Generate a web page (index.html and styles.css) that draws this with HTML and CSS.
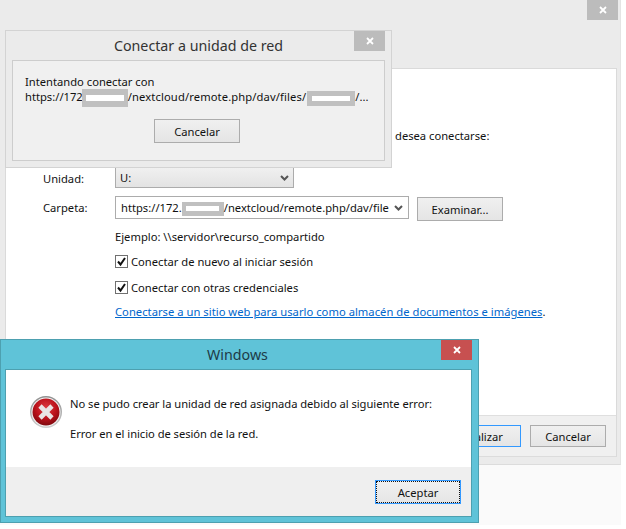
FILE: index.html
```html
<!DOCTYPE html>
<html lang="es">
<head>
<meta charset="utf-8">
<title>Conectar a unidad de red</title>
<link rel="stylesheet" href="styles.css">
</head>
<body>
<div class="backdrop"></div>
<section class="window back">
  <div class="titlebar"><span class="close idle back-close"><svg class="x" viewBox="0 0 8 8"><path d="M1 1l6 6M7 1l-6 6"/></svg></span></div>
  <div class="client">
    <main class="form">
      <p class="lead">desea conectarse:</p>
      <div class="row unit-row">
        <span class="label label-unit">Unidad:</span>
        <div class="select">U:<svg class="chev" viewBox="0 0 9 6"><path d="M1 1l3.500 3.500L8 1"/></svg></div>
      </div>
      <div class="row folder-row">
        <span class="label label-folder">Carpeta:</span>
        <div class="combo"><span class="combo-text">https://172.<span class="mask mask-c"><i></i></span>/nextcloud/remote.php/dav/file</span><svg class="chev" viewBox="0 0 9 6"><path d="M1 1l3.500 3.500L8 1"/></svg></div>
        <button class="btn browse">Examinar...</button>
      </div>
      <p class="example">Ejemplo: \\servidor\recurso_compartido</p>
      <label class="check first"><span class="box"><svg viewBox="0 0 11 11"><path d="M2 5.500l2.500 3L9 2"/></svg></span>Conectar de nuevo al iniciar sesión</label>
      <label class="check second"><span class="box"><svg viewBox="0 0 11 11"><path d="M2 5.500l2.500 3L9 2"/></svg></span>Conectar con otras credenciales</label>
      <p class="linkline"><a href="#">Conectarse a un sitio web para usarlo como almacén de documentos e imágenes</a>.</p>
    </main>
    <footer class="footer">
      <button class="btn default finish">Finalizar</button>
      <button class="btn cancel">Cancelar</button>
    </footer>
  </div>
</section>

<section class="window progress">
  <div class="bar-progress">
    <h2 class="title-gray">Conectar a unidad de red</h2>
    <span class="close idle progress-close"><svg class="x" viewBox="0 0 8 8"><path d="M1 1l6 6M7 1l-6 6"/></svg></span>
  </div>
  <div class="panel">
    <p class="status">Intentando conectar con<br>https://172<span class="mask mask-a"><i></i></span><span class="path">/nextcloud/remote.php/dav/files/</span><span class="mask mask-b"><i></i></span>/...</p>
    <button class="btn stop">Cancelar</button>
  </div>
</section>

<section class="window error">
  <div class="bar-error">
    <h2 class="title-win">Windows</h2>
    <span class="close danger"><svg class="x" viewBox="0 0 8 8"><path d="M1 1l6 6M7 1l-6 6"/></svg></span>
  </div>
  <div class="error-inner">
    <div class="error-body">
      <svg class="erricon" viewBox="0 0 32 32">
        <defs>
          <radialGradient id="red" cx="50%" cy="35%" r="70%">
            <stop offset="0" stop-color="#dd3a40"/>
            <stop offset="0.55" stop-color="#bb121b"/>
            <stop offset="1" stop-color="#75070d"/>
          </radialGradient>
          <linearGradient id="ring" x1="0" y1="0" x2="0" y2="1">
            <stop offset="0" stop-color="#8f8f8f"/>
            <stop offset="1" stop-color="#cfcfcf"/>
          </linearGradient>
        </defs>
        <circle cx="16" cy="16" r="16" fill="url(#ring)"/>
        <circle cx="16" cy="16" r="14.500" fill="#f4f4f4"/>
        <circle cx="16" cy="16" r="13.500" fill="url(#red)"/>
        <path d="M10 10l12 12M22 10L10 22" fill="none" stroke="#e9e4e4" stroke-width="4.600"/>
      </svg>
      <div class="error-text">
        <p>No se pudo crear la unidad de red asignada debido al siguiente error:</p>
        <p>Error en el inicio de sesión de la red.</p>
      </div>
    </div>
    <div class="error-footer">
      <button class="btn default focus">Aceptar</button>
    </div>
  </div>
</section>
</body>
</html>
```
FILE: styles.css
```css
* { box-sizing: border-box; }
html, body { margin: 0; padding: 0; background: #fff; }
body {
  position: relative;
  width: 626px;
  height: 529px;
  overflow: hidden;
  font-family: "Noto Sans", "Open Sans", sans-serif;
  font-size: 11.200px;
  color: #111;
}
p, h2 { margin: 0; font-weight: 400; }

.backdrop { position: absolute; left: 0; top: 465px; width: 621px; height: 60px; background: #fafafa; }

.window { position: absolute; }
.back { left: 0; top: 0; width: 621px; height: 465px; background: #ebebeb; border-bottom: 1px solid #dcdcdc; border-right: 1px solid #e4e4e4; }
.titlebar { height: 68px; display: flex; justify-content: flex-end; padding-right: 2px; }
.client { margin: 0 3px 0 5px; height: 389px; display: flex; flex-direction: column; border: 1px solid #dadada; border-bottom-color: #dcdcdc; background: #fff; }
.form { height: 347px; padding-left: 109px; }
.lead { padding: 59px 0 0 280px; height: 98px; line-height: 16px; }
.row { display: flex; align-items: center; }
.label { width: 72px; margin-left: -72px; }
.label-unit { padding-top: 1px; }
.label-folder { padding-top: 4px; }
.unit-row { height: 21px; margin-bottom: 8px; }
.select { width: 179px; height: 21px; padding: 0 4px; display: flex; align-items: center; justify-content: space-between; background: linear-gradient(#f0f0f0, #e3e3e3); border: 1px solid #acacac; }
.chev { width: 9px; height: 6px; fill: none; stroke: #555; stroke-width: 2; }
.folder-row { height: 24px; align-items: flex-start; }
.combo { width: 294px; height: 23px; padding: 0 5px 0 5px; display: flex; align-items: center; justify-content: space-between; background: #fff; border: 1px solid #acacac; }
.combo-text { width: 268px; white-space: nowrap; overflow: hidden; }
.browse { width: 86px; height: 24px; margin-left: 8px; margin-top: 1px; }
.example { margin-top: 9px; height: 16px; line-height: 16px; }
.check { display: flex; align-items: center; height: 14px; white-space: nowrap; }
.first { margin-top: 9px; }
.second { margin-top: 12px; }
.box { width: 13px; height: 13px; margin-right: 3px; background: #fff; border: 1px solid #707070; display: flex; }
.box svg { width: 11px; height: 11px; fill: none; stroke: #111; stroke-width: 2; }
.linkline { margin-top: 10px; line-height: 16px; white-space: nowrap; letter-spacing: 0.03px; }
.linkline a { color: #0066cc; text-decoration: underline; }

.footer { height: 41px; background: #f0f0f0; border-top: 1px solid #dfdfdf; padding: 9px 10px 0 0; display: flex; justify-content: flex-end; gap: 9px; align-items: flex-start; }

.btn { font: inherit; color: #111; padding: 0; background: linear-gradient(#f0f0f0, #e5e5e5); border: 1px solid #acacac; }
.default { border-color: #3399ff; }
.finish { width: 86px; height: 22px; padding-left: 6px; }
.cancel { width: 76px; height: 22px; }

.close { width: 31px; height: 20px; display: flex; align-items: center; justify-content: center; }
.idle { background: #bcbcbc; }
.danger { background: #c75050; }
.x { width: 8px; height: 8px; fill: none; stroke: #fff; stroke-width: 1.800; }

.mask { display: inline-flex; align-items: center; justify-content: center; background: #c0c0c0; vertical-align: middle; }
.mask i { display: block; background: #fff; }
.mask-a { width: 46px; height: 18px; margin-left: -1px; }
.mask-a i { width: 38px; height: 6px; }
.mask-b { width: 48px; height: 15px; margin-left: 1px; }
.mask-b i { width: 38px; height: 5px; }
.mask-c { width: 42px; height: 14px; }
.mask-c i { width: 33px; height: 5px; }
.path { letter-spacing: 0.12px; }

.progress { left: 5px; top: 30px; width: 387px; height: 138px; background: #ebebeb; border: 1px solid #d3d3d3; }
.bar-progress { height: 29px; display: flex; justify-content: flex-end; padding-right: 6px; position: relative; }
.title-gray { position: absolute; left: 0; right: 0; top: 3px; text-align: center; font-size: 14.250px; line-height: 24px; color: #333; }
.panel { margin: 0 6px; height: 101px; background: #f0f0f0; border: 1px solid #cdcdcd; padding: 13px 0 0 12px; display: flex; flex-direction: column; }
.status { line-height: 15px; white-space: nowrap; }
.stop { width: 86px; height: 24px; align-self: center; margin: 12px 15px 0 0; }

.error { left: 0; top: 339px; width: 479px; height: 184px; background: #5fc3d8; border: 1px solid #4da0b0; display: flex; flex-direction: column; }
.bar-error { height: 29px; display: flex; justify-content: flex-end; padding-right: 6px; position: relative; }
.title-win { position: absolute; left: 0; right: 4px; top: 3px; text-align: center; font-size: 14.250px; line-height: 24px; color: #1d3b47; }
.error-inner { margin: 0 6px 0 4px; height: 148px; border: 1px solid #4da0b0; background: #fff; display: flex; flex-direction: column; }
.error-body { height: 97px; display: flex; padding: 26px 0 0 24px; }
.erricon { width: 32px; height: 32px; flex: none; }
.error-text { margin-left: 8px; line-height: 16px; white-space: nowrap; letter-spacing: -0.04px; }
.error-text p + p { margin-top: 14px; }
.error-footer { flex: 1; background: #efefef; display: flex; justify-content: flex-end; align-items: flex-start; padding: 13px 10px 0 0; }
.focus { width: 86px; height: 24px; outline: 1px dotted #111; outline-offset: -2px; }
```
